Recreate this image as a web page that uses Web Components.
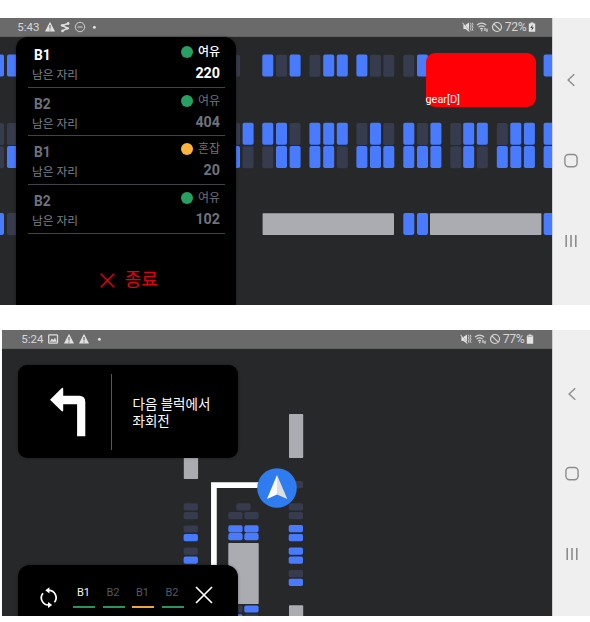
<!DOCTYPE html>
<html lang="ko">
<head>
<meta charset="utf-8">
<title>Parking navigation</title>
<style>
body{margin:0;padding-top:18px;background:#fff;font-family:Roboto,"Noto Sans CJK KR",sans-serif;display:flex;flex-direction:column;gap:25px;height:622px;box-sizing:border-box;overflow:hidden}
device-screen{flex:none}
device-screen.second{margin-left:2px;--nav-top:24px;--nav-step:80px;--nav-shift:1px}
.second status-bar{--bar-left:19.3px;--bar-right:18px;--icon-gap:3.8px;--icon-start:2.6px}
</style>
</head>
<body>
<device-screen style="height:287px">
  <status-bar slot="status" time="5:43" icons="warn bolt minus dot" battery="72%" cell="charge"></status-bar>
  <parking-map slot="map" plan="lot"></parking-map>
  <floor-list slot="overlay">
    <floor-row name="B1" state="여유" seats="220" active></floor-row>
    <floor-row name="B2" state="여유" seats="404"></floor-row>
    <floor-row name="B1" state="혼잡" seats="20" busy></floor-row>
    <floor-row name="B2" state="여유" seats="102"></floor-row>
  </floor-list>
  <gear-badge slot="overlay">gear[D]</gear-badge>
</device-screen>
<device-screen class="second" style="height:286px">
  <status-bar slot="status" time="5:24" icons="image warn warn dot" battery="77%" cell="full"></status-bar>
  <parking-map slot="map" plan="route"></parking-map>
  <turn-card slot="overlay">다음 블럭에서<br>좌회전</turn-card>
  <floor-dock slot="overlay">
    <floor-tab active>B1</floor-tab><floor-tab>B2</floor-tab><floor-tab busy>B1</floor-tab><floor-tab>B2</floor-tab>
  </floor-dock>
</device-screen>

<script>
function define(name, render) {
  customElements.define(name, class extends HTMLElement {
    constructor() { super(); this.attachShadow({ mode: 'open' }); }
    connectedCallback() { this.shadowRoot.innerHTML = render(this); }
  });
}

define('nav-rail', () => `
<style>
:host{display:flex;flex-direction:column;width:38px;background:#efefef;padding-top:calc(var(--nav-top,22px) + 31px);box-sizing:border-box;box-shadow:inset 1px 0 #d0d0d0}
svg{display:block;flex:none;width:18px;height:18px;margin:0 0 calc(var(--nav-step,80.5px) - 18px) calc(10px + var(--nav-shift,0px));fill:none;stroke:#8d8d8d;stroke-width:1.4}
</style>
<svg viewBox="0 0 18 18"><path d="M12.3 3.2 6.1 9l6.2 5.8"/></svg>
<svg viewBox="0 0 18 18"><rect x="2.9" y="2.5" width="12.2" height="12.2" rx="3.6"/></svg>
<svg viewBox="0 0 18 18"><path d="M4.2 3v12M9 3v12M13.8 3v12" stroke-width="1.6"/></svg>`);

define('device-screen', () => `
<style>
:host{display:flex;overflow:hidden}
main{flex:1;display:flex;flex-direction:column;background:#27282a;min-width:0}
.canvas{position:relative;flex:1;min-height:0}
</style>
<main><slot name="status"></slot><div class="canvas"><slot name="map"></slot><slot name="overlay"></slot></div></main>
<nav-rail></nav-rail>`);

const icons = {
  warn: '<svg width="12" height="12" viewBox="0 0 12 12"><path d="M6 .8 11 10.6H1z" fill="#e2e2e2"/><path d="M6 4v3.4M6 8.4v1.2" stroke="#686868" stroke-width="1.2"/></svg>',
  bolt: '<svg width="12" height="12" viewBox="0 0 12 12" fill="none" stroke="#dedede" stroke-width="1.6"><path d="M9.3 2.5 3.2 4.5l5.4 2.8-5.3 2.6"/><g fill="#dedede" stroke="none"><circle cx="9.1" cy="2.5" r="1.4"/><circle cx="3.4" cy="4.5" r="1.4"/><circle cx="8.4" cy="7.3" r="1.4"/><circle cx="3.5" cy="9.9" r="1.3"/></g></svg>',
  minus: '<svg width="12" height="12" viewBox="0 0 12 12" fill="none" stroke="#cfcfcf"><circle cx="6" cy="6" r="4.7"/><path d="M3.3 6h5.4"/></svg>',
  image: '<svg width="12" height="12" viewBox="0 0 12 12"><rect x="1.7" y="1.9" width="8.8" height="8.3" rx=".8" fill="none" stroke="#dedede" stroke-width="1.3"/><path d="m2.8 8.8 2-3.3 1.5 1.6 1.7-2.4 1.8 4.1z" fill="#dedede"/></svg>',
  dot: '<svg width="8" height="12" viewBox="0 0 8 12"><circle cx="5.4" cy="6.2" r="1.5" fill="#dedede"/></svg>'
};
define('status-bar', el => `
<style>
:host{display:flex;align-items:center;flex:none;height:19px;box-sizing:border-box;background:#6a6a6a;border-bottom:1px solid #5f6060;color:#d6d6d6;font-size:11.5px;line-height:18px;padding:0 var(--bar-right,16px) 0 var(--bar-left,17.3px)}
span{width:23px;white-space:nowrap}
.l{display:flex;gap:var(--icon-gap,3.2px);flex:1;margin-left:var(--icon-start,3.5px)}
.r{display:flex;gap:2px;margin-right:2px}
b{font-weight:400;font-size:12.2px;width:23.3px;white-space:nowrap;letter-spacing:-.3px}
svg{display:block}
</style>
<span>${el.getAttribute('time')}</span>
<div class="l">${el.getAttribute('icons').split(' ').map(n => icons[n]).join('')}</div>
<div class="r">
<svg width="12" height="12" viewBox="0 0 12 12"><path d="M1.4 4h2L7 1.6v8.8L3.4 8h-2z" fill="#e0e0e0"/><path d="m1 1.4 6.6 8.8" stroke="#6a6a6a" stroke-width=".6"/><path d="m.6 1.8 6.6 8.8" stroke="#e0e0e0"/><path d="m8.3 1.8.8 1.5-.8 1.5.8 1.5-.8 1.5.8 2M10.2 1.8l.8 1.5-.8 1.5.8 1.5-.8 1.5.8 2" fill="none" stroke="#d6d6d6" stroke-width=".9"/></svg>
<svg width="13" height="12" viewBox="0 0 13 12" fill="none" stroke="#d3d3d3" stroke-width="1.2"><path d="M1 4q4.6-3.8 9.2 0M2.6 6.1q3-2.5 6 0M4.2 8q1.4-1.2 2.8 0"/><path d="M5.7 8.4v1.8M9 7v3M11 7.8v3" stroke-width="1.3"/></svg>
<svg width="12" height="12" viewBox="0 0 12 12" fill="none" stroke="#d8d8d8" stroke-width="1.2"><circle cx="6" cy="6" r="4.5"/><path d="m2.8 2.8 6.4 6.4"/></svg>
</div>
<b>${el.getAttribute('battery')}</b>
<svg width="8" height="12" viewBox="0 0 8 12"><path d="M2.5 1.4h3v1.2H7.2v8.2H.8V2.6h1.7z" fill="#e4e4e4"/>${el.getAttribute('cell') === 'charge' ? '<path d="M4.7 3.6 2.3 7H4l-.6 2.7L5.9 6.4H4.2z" fill="#3c3c3c"/>' : '<path d="M1.7 3.4h4.6" stroke="#aaa"/>'}</svg>`);

/* Parking bays: b = free, d = taken, g = structure */
const rect = (x, y, w, h, k) => `<rect x="${x}" y="${y}" width="${w}" height="${h}" rx="${k === 'g' ? .8 : 1.8}" class="${k}"/>`;
function lotPlan() {
  const xs = [-7, 7, 229, 242.6, 262.3, 276, 289.6, 309.4, 323.2, 336.8, 356.4, 370, 383.3, 403.3, 417, 430.4, 450.3, 463.2, 476.8, 496.8, 510.3, 523.9, 543.6];
  const rows = [
    [17.6, 'bbd.bdbdbbbdddb.......b'],
    [85.8, 'dddbbbdbbbdbdbdbdbbdbbb'],
    [109.1, 'dbbddbbbbdbbbbbbdbdbbbb'],
    [175.9, 'bd...........bb.......b']
  ];
  const bays = rows.map(([y, p]) => [...p].map((k, i) => k === '.' ? '' : rect(xs[i], k === 'd' ? y + .2 : y, 11, 22, k)).join('')).join('');
  return bays + rect(262.6, 176.3, 131.4, 21.7, 'g') + rect(430, 176.3, 111.4, 21.7, 'g');
}
function routePlan() {
  const col = (x, list) => list.map(([y, k]) => rect(x, y - 349, 14.3, 7.2, k)).join('');
  return rect(181.8, 100, 14.3, 30, 'g') + rect(287, 65, 14.2, 44, 'g') + rect(226.3, 194, 30.4, 61, 'g') + rect(287, 256.3, 14.2, 14, 'g')
    + col(181.6, [[503.2, 'd'], [512, 'd'], [525.4, 'd'], [534, 'b'], [547.6, 'd'], [556.6, 'b']])
    + col(234.3, [[503.2, 'd']])
    + col(226.3, [[512, 'd'], [525.2, 'b'], [533.1, 'b'], [605.4, 'd'], [614.3, 'b']])
    + col(242.3, [[512, 'd'], [525.2, 'b'], [533.1, 'b'], [605.4, 'b'], [614.3, 'd']])
    + col(286.7, [[481, 'd'], [503.2, 'd'], [512, 'd'], [525, 'b'], [534, 'b'], [547.5, 'b'], [556.5, 'b'], [570, 'd'], [578.8, 'b']])
    + `<path d="M211.9 236V136.1H270" fill="none" stroke="#fff" stroke-width="5.7"/>
       <circle cx="275" cy="139" r="19.8" fill="#2f7cf0"/>
       <path d="M275 126 265 150l10-4.5z" fill="#fff"/><path d="M275 126l10.3 24-10.3-4.5z" fill="#dedee0"/>`;
}
define('parking-map', el => `
<style>:host{display:block;height:100%}svg{display:block;width:100%;height:100%;overflow:hidden}.b{fill:#487bff}.d{fill:#373b4e}.g{fill:#abacb2}</style>
<svg>${el.getAttribute('plan') === 'lot' ? lotPlan() : routePlan()}</svg>`);

define('floor-list', () => `
<style>
:host{position:absolute;left:16px;top:0;bottom:0;width:220px;box-sizing:border-box;background:#000;border-radius:12px 12px 0 0;padding:2px 11.5px 0 12px;display:flex;flex-direction:column;box-shadow:0 0 3px #0006}
.end{display:flex;align-items:center;justify-content:center;color:#e6000f;font-size:18px;line-height:26px;gap:10px;margin-top:33px;padding-left:5px}
svg{display:block;margin-top:2px}
</style>
<slot></slot>
<div class="end"><svg width="15" height="15" viewBox="0 0 15 15" stroke="#e6000f" stroke-width="1.5"><path d="M.8.8l13.4 13.4M14.2.8.8 14.2"/></svg>종료</div>`);

define('floor-row', el => {
  const on = el.hasAttribute('active');
  return `
<style>
:host{display:grid;grid-template-columns:1fr auto;height:48.7px;flex:none;box-sizing:border-box;border-bottom:1.2px solid #42434a;padding:4px 4.5px 0 4px;grid-template-rows:20px 22px;color:${on ? '#fff' : '#6e727d'}}
div{white-space:nowrap}
.n{font-weight:700;font-size:13.8px;line-height:25px;padding-left:2px}
.s{display:flex;gap:4.5px;font-size:12px;font-weight:${on ? 500 : 400};line-height:19.5px;justify-content:flex-end}
.s i{width:12px;height:12px;border-radius:50%;background:${el.hasAttribute('busy') ? '#ffb43e' : '#28a063'};margin-top:3px}
.k{font-size:11.7px;line-height:25px;color:#7d808a}
.v{font-size:14.3px;font-weight:700;text-align:right;line-height:21px}
</style>
<div class="n">${el.getAttribute('name')}</div><div class="s"><i></i>${el.getAttribute('state')}</div>
<div class="k">남은 자리</div><div class="v">${el.getAttribute('seats')}</div>`;
});

define('gear-badge', () => `
<style>:host{position:absolute;left:425.5px;top:16px;width:110.3px;height:54px;border-radius:9px;background:#ff0007;display:flex;align-items:flex-end;color:#fff;font-size:10.9px;line-height:14px}</style>
<span><slot></slot></span>`);

define('turn-card', () => `
<style>
:host{position:absolute;left:16px;top:16px;width:220px;height:93px;background:#000;border-radius:9px;display:flex;align-items:center;color:#fff;font-size:13.5px;line-height:16.7px;box-shadow:0 0 3px #0005}
svg{display:block;width:93px;height:93px}
.rule{width:1px;height:76px;background:#55565c}
p{margin:3px 0 0 20.5px;white-space:nowrap}
</style>
<svg viewBox="0 0 93 93"><path d="M32 34.8 43.6 23.3q1.6-1.3 1.6 1v6.4H61q6.3 0 6.3 6.3v34.2h-8.2V39.3H45.2v6.2q-.4 1.7-1.7.6z" fill="#fff"/></svg>
<div class="rule"></div><p><slot></slot></p>`);

define('floor-dock', () => `
<style>
:host{position:absolute;left:16px;bottom:0;width:220px;height:51.5px;box-sizing:border-box;background:#000;border-radius:12px 12px 0 0;display:flex;align-items:flex-start;padding:20px 0 0 20px;box-shadow:0 0 3px #0005}
.tabs{display:flex;gap:7.5px;margin:-.6px 11.5px 0 13px}
svg{display:block}
.x{margin-top:1px}
</style>
<svg width="22" height="24" viewBox="0 0 22 24" fill="none" stroke="#fff" stroke-width="1.7"><path d="M11 5.4A7.2 7.2 0 0 1 16.4 17.2M10.3 20A7.2 7.2 0 0 1 5 8.2"/><path d="M11.4 2.2v6.2L7.3 5.3zM10 16.9v6.2l4.2-3.1z" fill="#fff" stroke="none"/></svg>
<div class="tabs"><slot></slot></div>
<svg class="x" width="18" height="18" viewBox="0 0 18 18" stroke="#fff" stroke-width="1.7"><path d="M1 1l16 16M17 1 1 17"/></svg>`);

define('floor-tab', el => `
<style>:host{display:block;width:22px;box-sizing:border-box;padding-right:1px;text-align:center;font-size:11px;line-height:17px;height:24.5px;border-bottom:2.2px solid ${el.hasAttribute('busy') ? '#f0a53c' : '#28955f'};color:${el.hasAttribute('active') ? '#f4f4f4' : '#555960'}}</style>
<slot></slot>`);
</script>
</body>
</html>
